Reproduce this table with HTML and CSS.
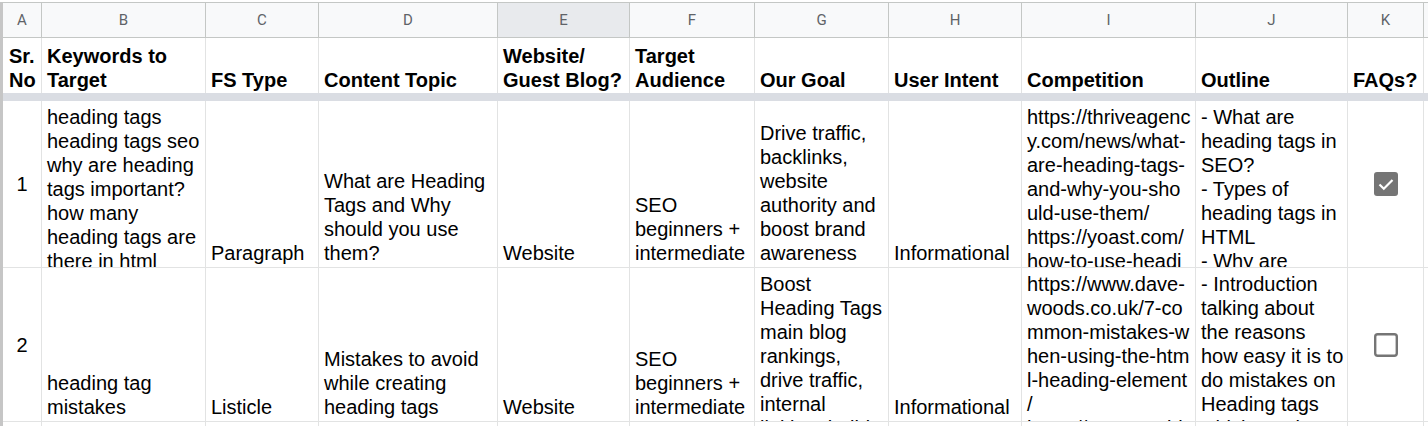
FILE: index.html
```html
<!DOCTYPE html>
<html lang="en">
<head>
    <meta charset="UTF-8">
    <meta name="viewport" content="width=device-width, initial-scale=1.0">
    <title>Content Plan - Sheet</title>
    <link rel="stylesheet" href="styles.css">
</head>
<body>
    <div class="sheet">
        <!-- column letters -->
        <div class="col-head">A</div>
        <div class="col-head">B</div>
        <div class="col-head">C</div>
        <div class="col-head">D</div>
        <div class="col-head selected">E</div>
        <div class="col-head">F</div>
        <div class="col-head">G</div>
        <div class="col-head">H</div>
        <div class="col-head">I</div>
        <div class="col-head">J</div>
        <div class="col-head">K</div>
        <div class="col-head"></div>

        <!-- header row -->
        <div class="cell head narrow"><div class="txt">Sr. No</div></div>
        <div class="cell head"><div class="txt">Keywords to Target</div></div>
        <div class="cell head"><div class="txt">FS Type</div></div>
        <div class="cell head"><div class="txt">Content Topic</div></div>
        <div class="cell head"><div class="txt">Website/ Guest Blog?</div></div>
        <div class="cell head"><div class="txt">Target Audience</div></div>
        <div class="cell head"><div class="txt">Our Goal</div></div>
        <div class="cell head"><div class="txt">User Intent</div></div>
        <div class="cell head"><div class="txt">Competition</div></div>
        <div class="cell head"><div class="txt">Outline</div></div>
        <div class="cell head"><div class="txt">FAQs?</div></div>
        <div class="cell head"></div>

        <div class="freeze"></div>

        <!-- row 1 -->
        <div class="cell row1 center"><div class="txt">1</div></div>
        <div class="cell row1 top"><div class="txt">heading tags<br>heading tags seo<br>why are heading tags important?<br>how many heading tags are there in html<br>heading tags html</div></div>
        <div class="cell row1"><div class="txt">Paragraph</div></div>
        <div class="cell row1"><div class="txt">What are Heading Tags and Why should you use them?</div></div>
        <div class="cell row1"><div class="txt">Website</div></div>
        <div class="cell row1"><div class="txt">SEO beginners + intermediate</div></div>
        <div class="cell row1"><div class="txt">Drive traffic, backlinks, website authority and boost brand awareness</div></div>
        <div class="cell row1"><div class="txt">Informational</div></div>
        <div class="cell row1 top"><div class="txt url"><span>https://thriveagenc</span><span>y.com/news/what-</span><span>are-heading-tags-</span><span>and-why-you-sho</span><span>uld-use-them/</span><span>https://yoast.com/</span><span>how-to-use-headi</span><span>ngs-on-your-site/</span></div></div>
        <div class="cell row1 top"><div class="txt">- What are heading tags in SEO?<br>- Types of heading tags in HTML<br>- Why are heading tags important?</div></div>
        <div class="cell row1 center">
            <svg class="check" width="24" height="24" viewBox="0 0 24 24">
                <rect x="0" y="0" width="24" height="24" rx="3" fill="#757575"/>
                <polyline points="5.5,12.5 9.8,16.8 18.5,8" fill="none" stroke="#fff" stroke-width="2.2"/>
            </svg>
        </div>
        <div class="cell row1"></div>

        <!-- row 2 -->
        <div class="cell row2 center"><div class="txt">2</div></div>
        <div class="cell row2"><div class="txt">heading tag mistakes</div></div>
        <div class="cell row2"><div class="txt">Listicle</div></div>
        <div class="cell row2"><div class="txt">Mistakes to avoid while creating heading tags</div></div>
        <div class="cell row2"><div class="txt">Website</div></div>
        <div class="cell row2"><div class="txt">SEO beginners + intermediate</div></div>
        <div class="cell row2 top"><div class="txt">Boost Heading Tags main blog rankings, drive traffic, internal linking, build authority</div></div>
        <div class="cell row2"><div class="txt">Informational</div></div>
        <div class="cell row2 top"><div class="txt url"><span>https://www.dave-</span><span>woods.co.uk/7-co</span><span>mmon-mistakes-w</span><span>hen-using-the-htm</span><span>l-heading-element</span><span>/</span><span>https://www.seobi</span></div></div>
        <div class="cell row2 top"><div class="txt">- Introduction talking about the reasons how easy it is to do mistakes on Heading tags which can be avoided</div></div>
        <div class="cell row2 center">
            <svg class="check" width="24" height="24" viewBox="0 0 24 24">
                <rect x="1.2" y="1.2" width="21.6" height="21.6" rx="2.5" fill="#fff" stroke="#757575" stroke-width="2.4"/>
            </svg>
        </div>
        <div class="cell row2"></div>

        <!-- row 3 (cut off) -->
        <div class="cell row3"></div>
        <div class="cell row3"></div>
        <div class="cell row3"></div>
        <div class="cell row3"></div>
        <div class="cell row3"></div>
        <div class="cell row3"></div>
        <div class="cell row3"></div>
        <div class="cell row3"></div>
        <div class="cell row3"></div>
        <div class="cell row3"></div>
        <div class="cell row3"></div>
        <div class="cell row3"></div>
    </div>
</body>
</html>
```

FILE: styles.css
```css
html, body {
    margin: 0;
    padding: 0;
    overflow: hidden;
    background: #fff;
}

body {
    font-family: "Liberation Sans", Arial, sans-serif;
    font-size: 20px;
    line-height: 24px;
    color: #000;
}

.sheet {
    margin-top: 2px;
    border-top: 1px solid #c4c7c5;
    border-left: 3px solid #c6c6c6;
    display: grid;
    grid-template-columns: 39px 164px 113px 179px 132px 125px 134px 133px 174px 152px 76px 1fr;
    grid-template-rows: 35px 55px 8px 167px 154px 40px;
}

.col-head {
    box-sizing: border-box;
    background: #f8f9fa;
    border-right: 1px solid #c4c7c5;
    border-bottom: 1px solid #c4c7c5;
    display: flex;
    align-items: center;
    justify-content: center;
    font-family: Roboto, "Liberation Sans", sans-serif;
    font-size: 15px;
    color: #5f6368;
}

.col-head.selected {
    background: #e8eaed;
}

.cell {
    box-sizing: border-box;
    border-right: 1px solid #e2e3e3;
    border-bottom: 1px solid #e2e3e3;
    padding: 4px 3px 2px 5px;
    overflow: hidden;
    display: flex;
    flex-direction: column;
    justify-content: flex-end;
}

.cell.head {
    border-bottom: none;
    padding-bottom: 1px;
    font-weight: bold;
}

.cell.narrow {
    padding-left: 6px;
    padding-right: 1px;
}

.cell.top {
    justify-content: flex-start;
}

.cell.center {
    align-items: center;
    justify-content: center;
    padding: 0;
}

.freeze {
    grid-column: 1 / -1;
    background: #dadde3;
}

.url span {
    display: block;
    white-space: nowrap;
}

.check {
    display: block;
}
```
